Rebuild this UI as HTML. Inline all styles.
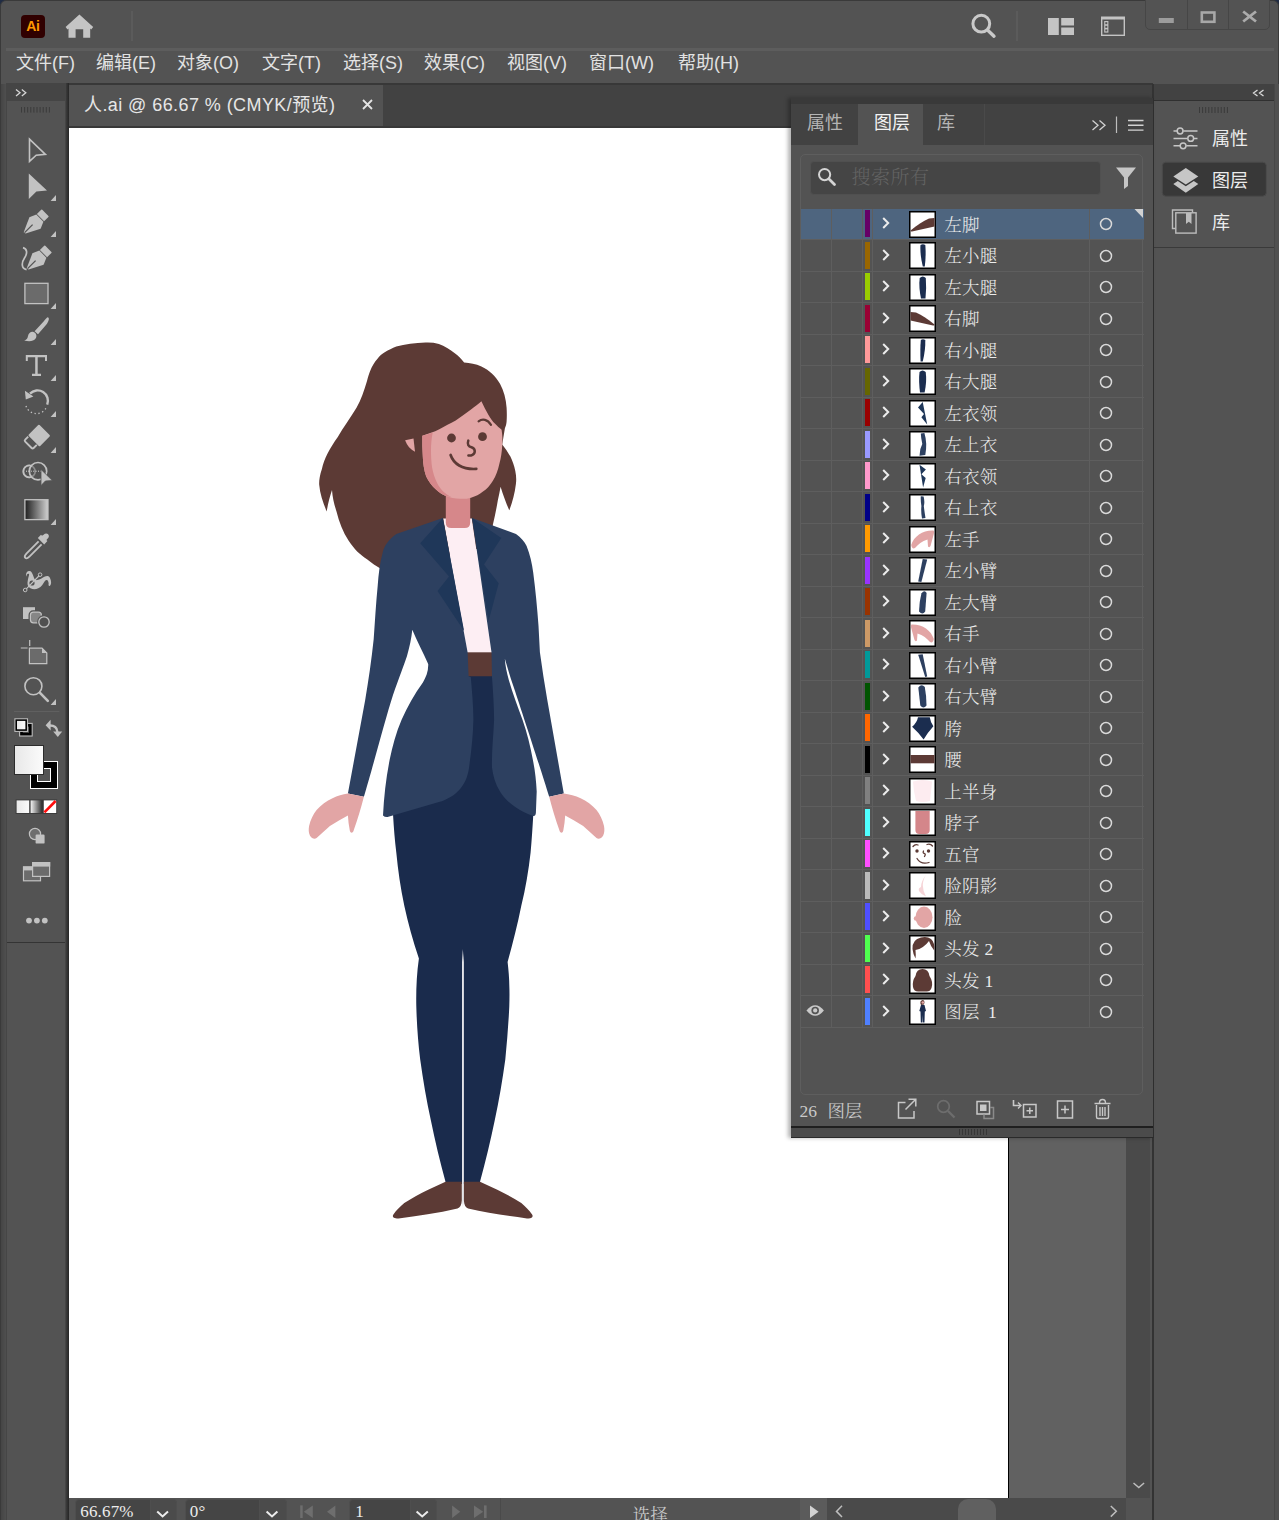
<!DOCTYPE html>
<html lang="zh-CN">
<head>
<meta charset="utf-8">
<title>人.ai @ 66.67 % (CMYK/预览)</title>
<style>
*{box-sizing:border-box;margin:0;padding:0}
html,body{width:1279px;height:1520px;overflow:hidden;background:#202c44}
body{position:relative;font-family:"Liberation Sans","Noto Sans CJK SC",sans-serif;color:#dcdcdc}
.abs{position:absolute}
svg{position:absolute;overflow:visible}
/* window frame */
#frame{left:0;top:0;width:1279px;height:1530px;background:#535353;border:1px solid #3a3a3a;border-radius:6px 6px 0 0}
/* title bar */
#titleline{left:6px;top:48px;width:1268px;height:2.600px;background:#5d5d5d}
#ailogo{left:21px;top:15px;width:24px;height:23px;background:#300000;border-radius:4px;color:#ff9a00;font:bold 14px/23px "Liberation Sans",sans-serif;text-align:center;letter-spacing:-0.3px}
.vsep{width:2px;background:#5b5b5b}
#winbtns{left:1145px;top:-1px;width:125px;height:31px;border:1px solid #464646;border-radius:0 0 5px 5px;background:#535353}
#winbtns i{position:absolute;top:0;width:1px;height:30px;background:#464646}
/* menu */
#menu{left:0;top:51px;height:32px;width:900px;font-size:18px;line-height:24px;color:#e2e2e2;white-space:nowrap}
#menu span{position:absolute;top:0}
/* tabs */
#tabstrip{left:68px;top:83px;width:1085px;height:45px;background:#424242;border-top:2px solid #383838;border-bottom:2px solid #383838;border-left:1px solid #383838}
#doctab{left:69px;top:85px;width:314px;height:41px;background:#535353;font-size:18px;line-height:24px;color:#e6e6e6;white-space:nowrap}
#canvas{left:69px;top:128px;width:940px;height:1370px;background:#fff;border-right:1px solid #000}
#paste{left:1009px;top:128px;width:117px;height:1370px;background:#616161}
#vscroll{left:1126px;top:128px;width:24px;height:1370px;background:#4a4a4a}
/* tool panel */
#toolhead{left:6px;top:83.300px;width:60px;height:18.200px;background:#454545}
#toolpanel{left:6px;top:84px;width:60px;height:1436px;border-left:1px solid #464646;border-right:1px solid #454545}
#toolbot{left:7px;top:941.500px;width:58px;height:1.500px;background:#343434}
#toolgap{left:66px;top:83px;width:3px;height:1437px;background:linear-gradient(90deg,#3c3c3c,#262626)}
#leftedge{left:1px;top:84px;width:5px;height:1436px;background:linear-gradient(90deg,#454545,#4f4f4f)}
/* status */
#status{left:69px;top:1498px;width:1084px;height:22px;background:#535353}
/* right dock */
/* layers panel */

#dock{left:1152px;top:84px;width:122px;height:1436px;background:#535353;border-left:2px solid #333}
.dk{position:absolute;left:58px;font-size:18px;line-height:24px;color:#ececec;white-space:nowrap}
#layers{left:791px;top:98px;width:363px;height:1040px;background:#535353;border-right:1.5px solid #2e2e2e;border-bottom:1px solid #2a2a2a;box-shadow:-3px 0 4px rgba(0,0,0,.3)}
.ptab{top:6px;height:41px;font-size:18px;line-height:24px;color:#b4b4b4}
.ptab span{position:absolute;top:6.500px;white-space:nowrap}
.ptab.on{background:#535353;color:#f2f2f2}
#lbox{left:9.300px;top:56px;width:343.200px;height:940.500px;border:1px solid #5e5e5e;border-radius:5px}
#search{left:18.600px;top:62.500px;width:291.500px;height:34px;background:#454545;border:1px solid #505050;border-radius:4px}
#search span{position:absolute;left:41px;top:4.500px;font:300 19px/24px "Liberation Serif","Noto Serif CJK SC",serif;color:#636363;letter-spacing:.5px}
.row{left:10px;width:342.500px;height:31.500px;border-bottom:1px solid #5e5e5e;
background-image:linear-gradient(#5e5e5e,#5e5e5e),linear-gradient(#5e5e5e,#5e5e5e),linear-gradient(#5e5e5e,#5e5e5e),linear-gradient(#5e5e5e,#5e5e5e);
background-size:1px 100%;background-repeat:no-repeat;background-position:29.800px 0,60.800px 0,70.800px 0,287.800px 0}
.row.sel{background-color:#4e657f}
.row .cb{position:absolute;left:63.800px;top:1.500px;width:5px;height:27.300px}
.row .chev{left:80.800px;top:8.800px}
.row .th{left:107.700px;top:2.200px}
.row .nm{position:absolute;left:143.200px;top:4.300px;font:300 17.500px/24px "Liberation Serif","Noto Serif CJK SC",serif;color:#ececec;white-space:nowrap;letter-spacing:.3px}
.row .tg{left:298.400px;top:8.900px}
#lfoot{left:8.500px;top:1001px;font:17.500px/24px "Liberation Serif","Noto Serif CJK SC",serif;color:#c9c9c9;white-space:nowrap;word-spacing:6px}

#status{overflow:hidden}
.sfield{top:1.400px;height:24px;background:#454545;border:1px solid #4e4e4e;border-radius:4px 0 0 0;font:17px/20px "Liberation Serif","Noto Serif CJK SC",serif;color:#ececec;letter-spacing:.15px}
.sfield span{position:absolute;top:1.700px;white-space:nowrap}
.sdrop{top:1.400px;height:24px;background:#4b4b4b;border:1px solid #4e4e4e;border-left:none;border-radius:0 4px 0 0}
#stool{left:563.700px;top:4.500px;font:17.500px/24px "Liberation Serif","Noto Serif CJK SC",serif;color:#c9c9c9;white-space:nowrap}
</style>
</head>
<body>
<div id="frame" class="abs"></div>
<div class="abs" style="left:1273.500px;top:84px;width:1px;height:1436px;background:#474747"></div><div class="abs" style="left:1274.500px;top:84px;width:4px;height:1436px;background:#505050"></div>
<!-- TITLE BAR -->
<div id="ailogo" class="abs">Ai</div>
<div id="titleline" class="abs"></div>
<div class="abs vsep" style="left:131px;top:11px;height:30px"></div>
<div class="abs vsep" style="left:1016px;top:11px;height:30px"></div>
<div id="winbtns" class="abs"><i style="left:41px"></i><i style="left:82px"></i></div>
<!-- TITLE ICONS -->
<svg id="ticons" class="abs" style="left:0;top:0" width="1279" height="50" viewBox="0 0 1279 50" fill="#c4c4c4">
<path d="M79.400 14.400 L93.200 27 L91.200 29.500 L90.200 28.600 V37.700 H83.200 V29.200 H75.600 V37.700 H68.500 V28.600 L67.500 29.500 L65.600 27 Z"/>
<circle cx="981.300" cy="23.700" r="8.400" fill="none" stroke="#c9c9c9" stroke-width="3"/>
<path d="M988 30.600 L994 36.200" stroke="#c9c9c9" stroke-width="3.400" stroke-linecap="round" fill="none"/>
<rect x="1048" y="18" width="10.800" height="17"/><rect x="1061.200" y="18" width="12.800" height="7.500"/><rect x="1061.200" y="27.500" width="12.800" height="7.500"/>
<rect x="1101.700" y="17.700" width="22.600" height="17.600" fill="none" stroke="#c4c4c4" stroke-width="1.400"/><rect x="1101" y="16.500" width="24" height="3"/>
<rect x="1104.200" y="21" width="4.200" height="11.600"/><g fill="#535353"><rect x="1105.300" y="22.200" width="2" height="2"/><rect x="1105.300" y="25.800" width="2" height="2"/><rect x="1105.300" y="29.400" width="2" height="2"/></g>
<!-- window buttons -->
<rect x="1158.800" y="18" width="15" height="5" fill="#9c9c9c"/>
<rect x="1201.800" y="12.500" width="12.600" height="9.300" fill="none" stroke="#a8a8a8" stroke-width="2.600"/>
<path d="M1243.200 11.500 L1256 21.500 M1256 11.500 L1243.200 21.500" stroke="#ababab" stroke-width="2.800" fill="none"/>
</svg>
<!-- MENU -->
<div id="menu" class="abs">
<span style="left:16px">文件(F)</span><span style="left:96px">编辑(E)</span><span style="left:177px">对象(O)</span><span style="left:262px">文字(T)</span><span style="left:343px">选择(S)</span><span style="left:424px">效果(C)</span><span style="left:507px">视图(V)</span><span style="left:589px">窗口(W)</span><span style="left:678px">帮助(H)</span>
</div>
<!-- DOCUMENT -->
<div id="tabstrip" class="abs"></div>
<div id="doctab" class="abs"><span class="abs" style="left:15px;top:8px;letter-spacing:.42px">人.ai @ 66.67 % (CMYK/预览)</span><svg class="abs" style="left:292px;top:13px" width="14" height="14"><path d="M2 2 L11 11 M11 2 L2 11" stroke="#e4e4e4" stroke-width="1.800" fill="none"/></svg></div>
<div id="canvas" class="abs"></div>
<div id="paste" class="abs"></div>
<!-- FIGURE -->
<svg id="figure" class="abs" style="left:0;top:0" width="1279" height="1520" viewBox="0 0 1279 1520">
<!-- hair -->
<path fill="#5c3a35" d="M425.6 342.6 C415 343 405 344.500 396.300 346.600 C388 350 381 354 377.700 358.500 C371 366 369 374 367 381 C364 391 361 400 356.500 407.700 C350 418 343 428 337.800 437 C330 448 324 459 321.900 468.900 C319.500 476 319 481 319.200 484.800 C320 494 323 503 326.700 511.400 C328 503 330 496 332 490 C332.500 497 334 504 336.500 511.400 C339 522 343 532 348.500 540.600 C354 549 360 555 367 559.200 C372 563 376 566 380.400 568.500 L400 572 L490 545 L492.900 524.500 C494.800 516.500 496.500 508.500 497.800 500.400 C498.900 495.800 499.800 491.200 500.600 486.700 C503 494.800 506 502.800 509.300 510.300 C512.500 501.800 514.800 493 515.900 484 C516.500 479.600 516.200 475.200 515.300 470.900 C514.200 465.900 512.600 461.100 510.400 456.600 C508 452.400 505.300 448.400 502.200 444.600 L504.900 428.200 C505.900 426.200 506.400 424 506.600 421.600 C506.900 417 506.900 412.400 506.600 407.700 C506 399 503.800 390.800 500 383.800 C495.500 376 489 370 481.400 366.500 C475.800 364 470 362.800 464.100 362.500 C461.500 359 458.400 355.900 454.800 353.200 C450 349.200 444.600 346 438.900 343.900 C434.600 342.800 430.200 342.400 425.600 342.600Z"/>
<!-- shirt -->
<path fill="#fdeef3" d="M443.200 518.500 L471.800 518.500 L491.500 652.800 H467.600Z"/>
<!-- neck -->
<path fill="#d6878a" d="M445.800 488 H470.200 V522.500 Q470.200 528 464.700 528 H451.300 Q445.800 528 445.800 522.500Z"/>
<!-- face -->
<path fill="#e2a5a5" d="M422.300 435.800 C428 434 434 432 439.300 429.300 C445 426 450 423.500 455.700 420.500 C461 417 466 413.500 471 409.600 C475 406.500 478.500 404 481.400 401.300 C483.500 406 486 410.500 488.500 415 C490.500 418.500 492.500 421.500 495.100 423.800 C497 426 499.500 428 501.600 429.800 C502.500 435 502.600 440 502.200 445.700 C501.800 452 501 458 499.500 463.200 C498 470 496 476 492.900 480.700 C490 485.500 487 489 483 491.600 C479.500 494.500 475.500 496.500 471 497.700 C467.500 498.800 463.500 499 460 498.800 C455 498.600 450 497.500 445.800 496 C442 494.500 439 492.500 436 489.500 C432 486 428.500 481.500 426.100 476.300 C424 470 423 463.500 422.800 456.600 C422.300 449.500 422.200 442.500 422.300 435.800Z"/>
<path fill="#d6878a" d="M422.300 435.800 C426 434.800 429.500 433.800 432.700 432.500 C431.500 438.500 431 444.500 431 450 C431 456 431.300 462 432.100 467.600 C433 473 434.800 478.200 437.100 482.900 C439 486.500 441.500 490 444.700 492.700 C446.800 494.500 449 496 451.300 497.100 C449.500 496.800 447.500 496.500 445.800 496 C442 494.500 439 492.500 436 489.500 C432 486 428.500 481.500 426.100 476.300 C424 470 423 463.500 422.800 456.600 C422.300 449.500 422.200 442.500 422.300 435.800Z"/>
<!-- ear -->
<path fill="#e2a5a5" d="M405.100 440.200 L413.500 438.600 L415 451.700 C410.500 449.500 407 445.500 405.100 440.200Z"/>
<!-- features -->
<g fill="#5c3a35"><circle cx="451.500" cy="438" r="4.400"/><circle cx="482.500" cy="436.700" r="4.400"/></g>
<g fill="none" stroke="#5c3a35" stroke-linecap="round">
<path d="M478.600 421.300 C482.500 418.300 487.500 419.300 491 424.800" stroke-width="2.200"/>
<path d="M468.300 440.600 C467 444.500 468.500 446.500 471.500 447.200 C475.500 448.500 475.800 453 472.500 454.800 C471 455.600 469.500 455.700 468.400 455.500" stroke-width="2.500"/>
<path d="M450.600 455 C453.500 463.500 462 469.800 476.300 468.900" stroke-width="2.700"/>
</g>
<!-- belt -->
<path fill="#5c3a35" d="M467 652.300 H492 V677 H467Z"/>
<!-- pants -->
<path fill="#1a2b4c" d="M467 676.200 H493 L534 800 L533.200 816 C532.500 828 531.800 840 530.600 852.600 C528.500 871 525.500 889 521.300 905.800 C517.500 925 512.500 944 507.600 962 C508.500 970 509.300 978 509.300 985.600 C509.600 992 509.500 999 509.300 1006.300 C508.500 1024 507 1042 505.300 1059.500 C502.500 1080 499 1100.500 494.700 1120.600 C490.500 1141 485.500 1161.500 480 1181.800 L479.500 1184 H446 L445.500 1181.800 C440 1161.500 435 1141 430.900 1120.600 C426.500 1100.500 423 1080 420.200 1059.500 C418 1042 416.800 1024 416.300 1006.300 C416 992 416.500 975 418.900 958.500 C413 941 408 923 404.300 905.800 C400.500 888 398 870 396.300 852.600 C394.800 840 393.800 828 393.100 815.400 L392 800Z"/>
<path fill="#e4e4e8" d="M462.800 949 L463.900 962 V1202 L462.900 1207 L462 1202 V962Z"/>
<!-- shoes -->
<path fill="#5c3a35" d="M445.500 1181.800 H461.800 V1200.400 C461.600 1205 460 1207.600 457.500 1208.400 C438 1213 417 1216 398.500 1218.400 C394 1219 391.800 1217 393.400 1214.600 C396.500 1210 400 1206.500 404.300 1203 C412 1198 420 1193.800 428.200 1189.700Z"/>
<path fill="#5c3a35" d="M480 1181.800 H463.900 V1200.400 C464.100 1205 465.700 1207.600 468.100 1208.400 C487.500 1213 508.500 1216 527 1218.400 C531.500 1219 533.700 1217 532.100 1214.600 C529 1210 525.500 1206.500 521.300 1203 C513.500 1198 505.500 1193.800 497.300 1189.700Z"/>
<!-- jacket left (with arm) -->
<path fill="#2d4060" d="M442.800 518 L396.300 534 C388 540 384.500 546 383 551.300 C380 562 378.500 574 377.700 585.800 C376 603 375 621 373.700 639 C371.500 660 368.500 680 365.200 700 L347.900 793.600 L363.900 796.800 C372 770 385 720 393 695 C399 678 404 665 407 656 C409.500 647 411.500 638 412.300 629.700 C417 641 423 652 428.200 664 C428.500 671 426 677 422.900 682.500 C414.500 694 407.500 706.500 401.600 719.700 C396 732.500 392.500 746 389.700 759.600 C386 778 384 796.500 383 815.400 Q385 817.500 388.400 816.800 L438.900 802.100 C447 799.500 454.500 795.500 460.100 788.900 C466 782 468.500 773.500 469.400 764.900 C471.500 750 473 735 473.400 719.700 C473.300 705 472 691 470.800 677.200 L468.600 676.200 L467.600 652.300Z"/>
<!-- jacket right (with arm) -->
<path fill="#2d4060" d="M472.100 518 L516 534 C521 537.500 524.500 541.500 526.600 546 C530 554.500 532 563.500 533.200 572.500 C535.500 590 537.200 608 538.500 625.700 L539.900 652.300 C542 668 544.500 684 547.300 700 L563.800 793.600 L549.200 796.800 C541 770 523 715 514 688 C510.500 678 507.500 668 504.800 658.600 C505.300 666 506.800 673 508.800 679.900 C512.600 693.500 517.800 706.500 522.500 719.700 C527 732.500 530.400 746 532.800 759.600 C535 770 536.200 781 536.700 791.500 L535.900 812.800 Q535.500 816.500 533.200 816 C527 814 521 811 516 807.500 C509.500 803.500 504 798 500 791.500 C495.500 784.500 493 776 492 767.600 C491.500 751.500 493.500 735.500 494.100 719.700 C494 705.500 493 691 492 677.200 L491.500 652.300Z"/>
<!-- lapels -->
<path fill="#1f3759" d="M442.800 518 L420.200 543.300 L449 576.500 L437.500 591.100 L464.100 631Z"/>
<path fill="#1f3759" d="M472.100 518 L501.300 538 L484 564.600 L498.700 583.200 L488.600 621Z"/>
<!-- hands -->
<path fill="#e2a5a5" d="M347.900 793.600 L363.900 796.800 C361 808 357.500 820 353.800 830 C353 833.500 350.500 833.500 349.800 830.500 C348.800 825.500 348.200 820.500 347.900 815.400 C342 818.500 336 822 329.900 826 C325.500 830 321 834 316.600 838 C314.500 839.500 311.800 838.500 309.900 835.400 C308.500 832.500 308.500 829.500 309.100 826 C310.500 820 313 814.500 316.600 810 C321 805 326.500 801 332.500 798.200 C337.500 796 342.500 794.500 347.900 793.600Z"/>
<path fill="#e2a5a5" d="M563.800 793.600 L549.200 796.800 C552.100 808 555.600 820 559.300 830 C560.100 833.500 562.600 833.500 563.300 830.500 C564.300 825.500 564.900 820.500 565.200 815.400 C571.100 818.500 577.100 822 583.200 826 C587.600 830 592.100 834 596.500 838 C598.600 839.500 601.300 838.500 603.200 835.400 C604.600 832.500 604.600 829.500 604 826 C602.600 820 600.100 814.500 596.500 810 C592.100 805 586.600 801 580.600 798.200 C575.600 796 569.200 794.500 563.800 793.600Z"/>
</svg>
<div id="vscroll" class="abs"></div>
<!-- STATUS BAR -->
<div id="status" class="abs">
<div class="abs sfield" style="left:6px;width:76px"><span style="left:4.300px">66.67%</span></div>
<div class="abs sdrop" style="left:82px;width:26px"></div>
<div class="abs sfield" style="left:115.500px;width:75px"><span style="left:4.300px">0°</span></div>
<div class="abs sdrop" style="left:190.500px;width:27px"></div>
<div class="abs sfield" style="left:279.700px;width:62px"><span style="left:5.500px">1</span></div>
<div class="abs sdrop" style="left:341.700px;width:26px"></div>
<div class="abs" style="left:430.500px;top:0;width:1px;height:22px;background:#4a4a4a"></div>
<div class="abs" style="left:730.500px;top:0;width:27.500px;height:22px;background:#5b5b5b"></div>
<div class="abs" style="left:758px;top:0;width:299px;height:22px;background:#4a4a4a"></div>
<div class="abs" style="left:889.400px;top:1.400px;width:38px;height:30px;border-radius:10px;background:#606060"></div>
<span class="abs" id="stool">选择</span>
<svg class="abs" style="left:0;top:0" width="1084" height="22" viewBox="69 1498 1084 22" fill="none">
<g stroke="#ececec" stroke-width="2"><path d="M157.200 1511.400 L162.600 1516.400 L168 1511.400"/><path d="M266.600 1511.400 L272 1516.400 L277.400 1511.400"/><path d="M416.600 1511.400 L422.200 1516.400 L427.800 1511.400"/></g>
<g fill="#6e6e6e"><rect x="300.200" y="1505.400" width="2.500" height="12.600"/><path d="M312.800 1505.400 V1518 L303.800 1511.700Z"/><path d="M335.400 1505.400 V1518 L327 1511.700Z"/><path d="M452.100 1505.400 V1518 L460.200 1511.700Z"/><path d="M474 1505.400 V1518 L483.200 1511.700Z"/><rect x="484" y="1505.400" width="2.600" height="12.600"/></g>
<path d="M810 1505.600 V1518 L818.600 1511.800Z" fill="#d2d2d2"/>
<path d="M842 1505.800 L836.500 1511.400 L842 1517" stroke="#bdbdbd" stroke-width="1.500"/>
<path d="M1110.800 1506 L1116.300 1511.300 L1110.800 1516.600" stroke="#bdbdbd" stroke-width="1.500"/>
</svg>
</div>
<svg class="abs" style="left:1127px;top:1478px" width="24" height="14"><path d="M6.500 5 L11.800 9.600 L17.100 5" fill="none" stroke="#bdbdbd" stroke-width="1.500"/></svg>
<!-- TOOLS -->
<div id="leftedge" class="abs"></div>
<div id="toolpanel" class="abs"></div>
<div id="toolbot" class="abs"></div>
<div id="toolgap" class="abs"></div>
<div id="toolhead" class="abs"></div>
<!-- TOOL ICONS -->
<svg id="tools" class="abs" style="left:0;top:0" width="80" height="960" viewBox="0 0 80 960" fill="#c2c2c2" stroke="none">
<defs>
<linearGradient id="gbw" x1="0" x2="1" y1="0" y2="0"><stop offset="0" stop-color="#1e1e1e"/><stop offset="1" stop-color="#d0d0d0"/></linearGradient>
<linearGradient id="gwh" x1="0" x2="1" y1="0" y2="0"><stop offset="0" stop-color="#e8e8e8"/><stop offset="1" stop-color="#fbfbfb"/></linearGradient>
<linearGradient id="gwb" x1="0" x2="1" y1="0" y2="0"><stop offset="0" stop-color="#f4f4f4"/><stop offset="1" stop-color="#2a2a2a"/></linearGradient>
<g id="pen"><path d="M36.3 214.6 L43.4 221.7 L40.6 228.8 L25.6 233.6 L23.7 232.3 L29.4 217.3 Z"/><path d="M36.9 214 L41.2 209.7 Q41.7 209.2 42.3 209.8 L48.4 215.9 Q48.9 216.4 48.4 216.9 L44.1 221.2 Z"/><path d="M24.6 232.6 L32.6 224.6" stroke="#535353" stroke-width="1.3" fill="none"/></g>
<path id="tri" d="M56 195 V201 H50.6 Z"/>
</defs>
<!-- collapse chevrons -->
<path d="M16 89.600 L20 92.800 L16 96 M21.800 89.600 L25.800 92.800 L21.800 96" stroke="#d6d6d6" stroke-width="1.300" fill="none"/>
<!-- grip -->
<path d="M21.500 107v5.600M24.600 107v5.600M27.700 107v5.600M30.800 107v5.600M33.900 107v5.600M37 107v5.600M40.100 107v5.600M43.200 107v5.600M46.300 107v5.600M49.400 107v5.600" stroke="#3b3b3b" stroke-width="1" fill="none"/>
<!-- 1 selection -->
<path d="M29.500 139.200 L45.400 154.300 L36.200 155.200 L29.500 161.400 Z" fill="none" stroke="#c2c2c2" stroke-width="1.600" stroke-linejoin="miter"/>
<!-- 2 direct selection -->
<path d="M28.8 173.4 L47 190.6 L36.4 191.4 L28.8 199 Z"/>
<use href="#tri"/>
<!-- 3 pen -->
<use href="#pen"/><use href="#tri" y="36"/>
<!-- 4 curvature -->
<use href="#pen" x="3" y="36"/>
<path d="M23 247.6 C27.5 249 27.5 253.5 24.5 258 C21.5 262.5 21 268.5 26.6 269.6" fill="none" stroke="#c2c2c2" stroke-width="1.700"/>
<!-- 5 rect -->
<rect x="24.9" y="283.3" width="23.1" height="20.3" fill="#6b6b6b" stroke="#c2c2c2" stroke-width="1.3"/><use href="#tri" y="108"/>
<!-- 6 brush -->
<path d="M48.2 317.4 C49.6 318.4 48.6 321.6 46.4 324.4 L38 334.2 L34.6 331.2 L43.6 321.4 C45.8 318.8 47.4 316.9 48.2 317.4 Z"/>
<path d="M33.6 332 C36.4 333 37.2 336.2 35.6 338.6 C33.6 341.6 29 342 24.2 340.6 C27 339.6 27.6 338 28 336 C28.6 333 31 331.2 33.6 332 Z"/>
<use href="#tri" y="144"/>
<!-- 7 type -->
<path d="M25.8 355 H47 V361 H45 V357.3 H37.7 V373.8 H41 V376 H32 V373.8 H35.2 V357.3 H27.8 V361 H25.8 Z"/><use href="#tri" y="180"/>
<!-- 8 rotate -->
<path d="M30 393.6 A10.4 10.4 0 0 1 47.2 404.6" fill="none" stroke="#c2c2c2" stroke-width="2.4"/>
<path d="M24.9 390.8 L25.8 399.4 L33.4 396.6 Z"/>
<path d="M26 406 A11 11 0 0 0 46.4 407.4" fill="none" stroke="#c2c2c2" stroke-width="1.3" stroke-dasharray="1.3 2.6"/>
<use href="#tri" y="216"/>
<!-- 9 eraser -->
<path d="M38.2 425.1 Q38.9 424.4 39.6 425.1 L49.6 435.1 Q50.3 435.8 49.6 436.5 L40.2 445.9 Q39.5 446.6 38.8 445.9 L28.8 435.9 Q28.1 435.2 28.8 434.5 Z"/>
<path d="M28.2 436.6 L25.2 439.6 Q24.2 440.6 25.2 441.6 L31.6 448 Q32.6 449 33.6 448 L36.8 444.8" fill="none" stroke="#c2c2c2" stroke-width="1.900"/>
<use href="#tri" y="252"/>
<!-- 10 shape builder -->
<circle cx="29.300" cy="471.400" r="5.900" fill="none" stroke="#8c8c8c" stroke-width="1.700"/>
<path d="M31.800 476.700 A5.900 5.900 0 1 1 31.800 466.100" fill="none" stroke="#c2c2c2" stroke-width="1.700"/>
<circle cx="38" cy="471.200" r="8.700" fill="none" stroke="#c2c2c2" stroke-width="1.700"/>
<path d="M26 471.2 H41" stroke="#d8d8d8" stroke-width="1" stroke-dasharray="1 1.4" fill="none"/>
<path d="M41 469.4 L52.4 480.6 L45.4 481 L41 485.6 Z" stroke="#535353" stroke-width="0.8"/>
<!-- 11 gradient -->
<rect x="24.9" y="499.7" width="23.1" height="19.9" fill="url(#gbw)" stroke="#c2c2c2" stroke-width="1.3"/><use href="#tri" y="324"/>
<!-- 12 eyedropper -->
<path d="M38.600 541.400 L26.400 553.600 Q23.800 556.400 25.300 557.800 Q26.700 559.200 29.400 556.600 L41.600 544.400" fill="none" stroke="#c2c2c2" stroke-width="1.800"/>
<path d="M43.6 534.8 C45.6 532.6 48.4 533.4 48.8 535.6 C49.2 537.4 48 538.4 46.4 540 L47.4 541 L44.2 544.4 L37.8 538 L41 534.8 L42 535.8 Z"/>
<!-- 13 puppet warp -->
<path d="M26.200 576.800 C25.600 573.500 27 571.300 28.800 571.100 C30 570.900 30.900 571.200 31.400 571.900 C33 574 33.500 576.800 34.400 578.800 C35.200 580.200 36 580.400 37 580.100 C38.500 579.900 39.800 579.500 41 578.800 C42.400 578 43.600 577.100 44.900 576.500 C45.800 576.100 46.700 575.900 47.500 576 C48.800 576.300 49.700 577.200 50.200 578.400 C50.800 579.700 51.100 581 51.100 582.400 C51.100 583.800 50.600 585 49.800 586 C49.200 586.200 48.700 585.800 48.500 585 C48.700 584 48.700 583.200 48.500 582.400 C48.200 581.300 47.700 580.400 46.900 580.100 C46.200 580 45.500 580.400 44.900 581.100 C44 582.400 43.200 583.800 42.300 585 C41.200 586.500 39.800 587.600 38.300 588.300 C37 588.900 35.700 589.300 34.400 589.300 C33 589.300 31.600 588.900 30.400 588.300 C29.400 587.800 28.700 587.100 28.200 586.300 C27.600 585.100 27.400 583.800 27.500 582.400 C27.700 580.600 28.100 578.800 28.500 577.100 C28.800 576 29.200 575 29.100 574.200 C28.500 573.600 27.400 573.800 26.800 574.800 C26.500 575.400 26.400 576.100 26.200 576.800 Z"/>
<circle cx="32" cy="583" r="2.600" fill="#535353"/>
<path d="M36 577.600 L38.800 574.800 L39.800 576.400 L37.400 578.600Z" fill="#535353"/>
<path d="M25.600 589.600 L39.800 575" stroke="#c2c2c2" stroke-width="1.100" fill="none"/>
<circle cx="25.200" cy="590" r="1.800" fill="#535353" stroke="#c2c2c2" stroke-width="1"/>
<circle cx="40.100" cy="574.700" r="1.800" fill="#535353" stroke="#c2c2c2" stroke-width="1"/>
<!-- 14 blend -->
<rect x="23" y="607.2" width="12" height="11.8"/>
<rect x="29.8" y="611.6" width="12" height="11.6" rx="3.4" fill="#868686" stroke="#535353" stroke-width="2.6"/>
<rect x="30.4" y="612.2" width="11" height="10.6" rx="3" fill="#868686" stroke="#c2c2c2" stroke-width="1.2"/>
<circle cx="44" cy="622" r="5.6" fill="#535353" stroke="#535353" stroke-width="2.6"/>
<circle cx="44" cy="622" r="5.2" fill="#505050" stroke="#c2c2c2" stroke-width="1.3"/>
<!-- 15 artboard -->
<path d="M29.7 640 V646 M20.8 648 H27.6" stroke="#c2c2c2" stroke-width="1.2" fill="none"/>
<path d="M29.4 648.2 H42 L46.8 653 V663.6 H29.4 Z" fill="#6b6b6b" stroke="#c2c2c2" stroke-width="1.2"/>
<path d="M42 648.2 L46.8 653 H42 Z"/>
<!-- 16 zoom -->
<circle cx="33.4" cy="686.2" r="8.5" fill="none" stroke="#c2c2c2" stroke-width="1.6"/>
<path d="M40 692.8 L47.8 700.8" stroke="#c2c2c2" stroke-width="2.6" stroke-linecap="round" fill="none"/>
<use href="#tri" y="504"/>
<!-- separator -->
<path d="M14 711.5 H59.4" stroke="#606060" stroke-width="1" fill="none"/>
<!-- default fill/stroke -->
<rect x="19.6" y="723.4" width="12.6" height="12.6" fill="#000" stroke="#bdbdbd" stroke-width="1.1"/>
<rect x="22.8" y="726.6" width="6.2" height="6.2" fill="#535353"/>
<rect x="14.9" y="718.8" width="12.6" height="12.6" fill="#000" stroke="#bdbdbd" stroke-width="1.1"/>
<rect x="17" y="720.9" width="8.4" height="8.4" fill="url(#gwh)"/>
<!-- swap -->
<path d="M49 725.6 C54.4 725.2 57.2 727.4 57.4 732" fill="none" stroke="#c2c2c2" stroke-width="2.4"/>
<path d="M45.6 725.2 L50.6 719.8 V730.4 Z"/><path d="M53.2 731.4 H62.2 L57.8 737 Z"/>
<!-- stroke swatch -->
<rect x="30.500" y="761.500" width="27" height="27" fill="#000" stroke="#fff" stroke-width="1"/>
<rect x="37.500" y="768.500" width="13" height="13" fill="#535353" stroke="#fff" stroke-width="1"/>
<!-- fill swatch -->
<rect x="14.500" y="745.500" width="29" height="29" fill="url(#gwh)" stroke="#2c2c2c" stroke-width="1"/>
<!-- color/gradient/none -->
<rect x="15.6" y="799.4" width="41.6" height="14.6" fill="#3c3c3c"/>
<rect x="16.6" y="800.4" width="12.6" height="12.6" fill="url(#gwh)"/>
<rect x="30.6" y="800.4" width="11.8" height="12.6" fill="url(#gwb)"/>
<rect x="43.8" y="800.4" width="12.4" height="12.6" fill="#fff"/>
<path d="M44.4 812.4 L55.6 801" stroke="#ff0d0d" stroke-width="2.6" fill="none"/>
<!-- draw mode -->
<circle cx="35" cy="834" r="5.6" fill="#6e6e6e" stroke="#c2c2c2" stroke-width="1.2"/>
<rect x="35.6" y="834.6" width="9" height="9" rx="1.2"/>
<!-- screen mode -->
<rect x="23.5" y="867" width="17" height="13.8" fill="#6b6b6b" stroke="#c2c2c2" stroke-width="1.2"/><rect x="23" y="866.4" width="18" height="4"/>
<rect x="32.6" y="862.6" width="17" height="13.8" fill="#6b6b6b" stroke="#c2c2c2" stroke-width="1.2"/><rect x="32" y="862" width="18.2" height="4.6"/>
<!-- dots -->
<circle cx="29" cy="920.6" r="2.9"/><circle cx="36.9" cy="920.6" r="2.9"/><circle cx="44.8" cy="920.6" r="2.9"/>
</svg>
<!-- DOCK -->
<div id="dock" class="abs">
<div class="abs" style="left:0;top:0;width:120px;height:17px;background:#424242;border-bottom:1.5px solid #303030"></div>
<svg class="abs" style="left:0;top:0" width="122" height="170" fill="none" stroke="#c6c6c6">
<path d="M103.500 6 L99.500 9 L103.500 12 M109.500 6 L105.500 9 L109.500 12" stroke="#dadada" stroke-width="1.300"/>
<path d="M45.500 23v6M48.600 23v6M51.700 23v6M54.800 23v6M57.900 23v6M61 23v6M64.100 23v6M67.200 23v6M70.300 23v6M73.400 23v6" stroke="#3a3a3a" stroke-width="1"/>
<!-- properties icon -->
<g stroke-width="1.500"><path d="M19.500 47 H23 M29.200 47 H43.500 M19.500 54.400 H33.500 M39.800 54.400 H43.500 M19.500 61.800 H26 M32.300 61.800 H43.500"/><circle cx="26.100" cy="47" r="2.900"/><circle cx="36.700" cy="54.400" r="2.900"/><circle cx="29.100" cy="61.800" r="2.900"/></g>
<!-- selected bg -->
<rect x="8.300" y="78.200" width="104" height="34" rx="3.500" fill="#383838" stroke="#4b4b4b" stroke-width="1"/>
<!-- layers icon -->
<path d="M19.300 92.500 L31.800 84 L44.300 92.500 L31.800 100.500 Z" fill="#c6c6c6" stroke="none"/>
<path d="M19.300 100 L23.800 97 L31.800 102.200 L39.800 97 L44.300 100 L31.800 108.800 Z" fill="#c6c6c6" stroke="none"/>
<!-- library icon -->
<g stroke-width="1.400" stroke="#bdbdbd"><path d="M21.500 144.500 H18.500 V126 H38.500 V128.500"/><rect x="21.800" y="128.800" width="20.300" height="20.300"/></g>
<path d="M32 129 H37.500 V140 L34.750 137.800 L32 140 Z" fill="#bdbdbd" stroke="none"/>
</svg>
<span class="dk" style="top:42.600px">属性</span><span class="dk" style="top:84.600px">图层</span><span class="dk" style="top:127px">库</span>
<div class="abs" style="left:0;top:162.500px;width:120px;height:1.500px;background:#3a3a3a"></div>
</div>
<!--LAYERS-START-->
<!-- LAYERS PANEL -->
<div id="layers" class="abs">
<div class="abs" style="left:0;top:0;width:362px;height:6px;background:#393939"></div>
<div class="abs" style="left:0;top:6px;width:362px;height:41px;background:#424242"></div>
<div class="abs ptab" style="left:0;width:67px"><span style="left:16px">属性</span></div>
<div class="abs ptab on" style="left:67px;width:65px"><span style="left:16px">图层</span></div>
<div class="abs ptab" style="left:132px;width:61.500px;border-right:1px solid #4a4a4a"><span style="left:14px">库</span></div>
<svg class="abs" style="left:0;top:2px" width="362" height="60" fill="none" stroke="#d2d2d2"><path d="M301.500 20.600 L307 25.300 L301.500 30 M308.500 20.600 L314 25.300 L308.500 30" stroke-width="1.300"/><path d="M325.500 16.500 V33" stroke-width="1.200" stroke="#bdbdbd"/><path d="M337 20.500 H352.500 M337 25.300 H352.500 M337 30.100 H352.500" stroke-width="1.400"/></svg>
<div class="abs" id="lbox"></div>
<div class="abs" id="search"><span>搜索所有</span></div>
<svg class="abs" style="left:26.400px;top:69px" width="22" height="20" fill="none" stroke="#d4d4d4"><circle cx="7.600" cy="7.600" r="5.600" stroke-width="2"/><path d="M12 12 L17.500 17.500" stroke-width="2.800" stroke-linecap="round"/></svg>
<svg class="abs" style="left:324px;top:67.8px" width="24" height="26"><path d="M1 1.500 H21 L13 11.500 V20 L9 23 V11.500Z" fill="#c6c6c6"/></svg>
<div class="abs row sel" style="top:110.5px"><i class="cb" style="background:#660066"></i><svg class="chev" width="8" height="12"><path d="M1.200 1 L6.200 6 L1.200 11" fill="none" stroke="#ececec" stroke-width="2"/></svg><svg class="th" width="27" height="27" viewBox="0 0 27 27"><rect x="0.750" y="0.750" width="25.500" height="25.500" fill="#fff" stroke="#000" stroke-width="1.500"/><path d="M1.5 19.5 C8 14 14 10 20 7.5 L25.5 7 V15.5 L3 20.5 Q1 20.8 1.5 19.5Z" fill="#5c3a35"/></svg><span class="nm">左脚</span><svg class="tg" width="14" height="14"><circle cx="7" cy="7" r="5.500" fill="none" stroke="#d9d9d9" stroke-width="1.500"/></svg></div>
<div class="abs row" style="top:142.0px"><i class="cb" style="background:#996600"></i><svg class="chev" width="8" height="12"><path d="M1.200 1 L6.200 6 L1.200 11" fill="none" stroke="#ececec" stroke-width="2"/></svg><svg class="th" width="27" height="27" viewBox="0 0 27 27"><rect x="0.750" y="0.750" width="25.500" height="25.500" fill="#fff" stroke="#000" stroke-width="1.500"/><path d="M11.500 3 Q13.800 1.500 16.300 3 Q17.200 13 15.800 24.600 H13.800 Q10.800 12 11.500 3Z" fill="#1b2d4f"/></svg><span class="nm">左小腿</span><svg class="tg" width="14" height="14"><circle cx="7" cy="7" r="5.500" fill="none" stroke="#d9d9d9" stroke-width="1.500"/></svg></div>
<div class="abs row" style="top:173.5px"><i class="cb" style="background:#99cc00"></i><svg class="chev" width="8" height="12"><path d="M1.200 1 L6.200 6 L1.200 11" fill="none" stroke="#ececec" stroke-width="2"/></svg><svg class="th" width="27" height="27" viewBox="0 0 27 27"><rect x="0.750" y="0.750" width="25.500" height="25.500" fill="#fff" stroke="#000" stroke-width="1.500"/><path d="M10.700 4 Q13.800 1 16.800 4 Q17.600 14 16.500 24.600 H12 Q9.600 13 10.700 4Z" fill="#1b2d4f"/></svg><span class="nm">左大腿</span><svg class="tg" width="14" height="14"><circle cx="7" cy="7" r="5.500" fill="none" stroke="#d9d9d9" stroke-width="1.500"/></svg></div>
<div class="abs row" style="top:205.0px"><i class="cb" style="background:#990033"></i><svg class="chev" width="8" height="12"><path d="M1.200 1 L6.200 6 L1.200 11" fill="none" stroke="#ececec" stroke-width="2"/></svg><svg class="th" width="27" height="27" viewBox="0 0 27 27"><rect x="0.750" y="0.750" width="25.500" height="25.500" fill="#fff" stroke="#000" stroke-width="1.500"/><path d="M25.5 19.5 C19 14 13 10 7 7.5 L1.5 7 V15.5 L24 20.5 Q26 20.8 25.5 19.5Z" fill="#5c3a35"/></svg><span class="nm">右脚</span><svg class="tg" width="14" height="14"><circle cx="7" cy="7" r="5.500" fill="none" stroke="#d9d9d9" stroke-width="1.500"/></svg></div>
<div class="abs row" style="top:236.5px"><i class="cb" style="background:#ff9999"></i><svg class="chev" width="8" height="12"><path d="M1.200 1 L6.200 6 L1.200 11" fill="none" stroke="#ececec" stroke-width="2"/></svg><svg class="th" width="27" height="27" viewBox="0 0 27 27"><rect x="0.750" y="0.750" width="25.500" height="25.500" fill="#fff" stroke="#000" stroke-width="1.500"/><path d="M11.800 3 Q14 1.500 16.300 3 Q16.600 13 13.700 24.600 H11.600 Q11 12 11.800 3Z" fill="#1b2d4f"/></svg><span class="nm">右小腿</span><svg class="tg" width="14" height="14"><circle cx="7" cy="7" r="5.500" fill="none" stroke="#d9d9d9" stroke-width="1.500"/></svg></div>
<div class="abs row" style="top:268.0px"><i class="cb" style="background:#666600"></i><svg class="chev" width="8" height="12"><path d="M1.200 1 L6.200 6 L1.200 11" fill="none" stroke="#ececec" stroke-width="2"/></svg><svg class="th" width="27" height="27" viewBox="0 0 27 27"><rect x="0.750" y="0.750" width="25.500" height="25.500" fill="#fff" stroke="#000" stroke-width="1.500"/><path d="M10.500 4 Q13.500 1 16.700 4 Q18 13 15.600 24.600 H11 Q9.500 13 10.500 4Z" fill="#1b2d4f"/></svg><span class="nm">右大腿</span><svg class="tg" width="14" height="14"><circle cx="7" cy="7" r="5.500" fill="none" stroke="#d9d9d9" stroke-width="1.500"/></svg></div>
<div class="abs row" style="top:299.5px"><i class="cb" style="background:#990000"></i><svg class="chev" width="8" height="12"><path d="M1.200 1 L6.200 6 L1.200 11" fill="none" stroke="#ececec" stroke-width="2"/></svg><svg class="th" width="27" height="27" viewBox="0 0 27 27"><rect x="0.750" y="0.750" width="25.500" height="25.500" fill="#fff" stroke="#000" stroke-width="1.500"/><path d="M13.700 2 L9 7.400 L15 14 L12.400 17.300 L18.200 24.600Z" fill="#1f3759"/></svg><span class="nm">左衣领</span><svg class="tg" width="14" height="14"><circle cx="7" cy="7" r="5.500" fill="none" stroke="#d9d9d9" stroke-width="1.500"/></svg></div>
<div class="abs row" style="top:331.0px"><i class="cb" style="background:#9999ff"></i><svg class="chev" width="8" height="12"><path d="M1.200 1 L6.200 6 L1.200 11" fill="none" stroke="#ececec" stroke-width="2"/></svg><svg class="th" width="27" height="27" viewBox="0 0 27 27"><rect x="0.750" y="0.750" width="25.500" height="25.500" fill="#fff" stroke="#000" stroke-width="1.500"/><path d="M11.800 2.500 L15.400 2 Q18.500 12 16.300 24 L10.500 24.800 Q10.500 18 13.300 13 Q12 7 11.800 2.500Z" fill="#2d4060"/></svg><span class="nm">左上衣</span><svg class="tg" width="14" height="14"><circle cx="7" cy="7" r="5.500" fill="none" stroke="#d9d9d9" stroke-width="1.500"/></svg></div>
<div class="abs row" style="top:362.5px"><i class="cb" style="background:#ff99cc"></i><svg class="chev" width="8" height="12"><path d="M1.200 1 L6.200 6 L1.200 11" fill="none" stroke="#ececec" stroke-width="2"/></svg><svg class="th" width="27" height="27" viewBox="0 0 27 27"><rect x="0.750" y="0.750" width="25.500" height="25.500" fill="#fff" stroke="#000" stroke-width="1.500"/><path d="M10.500 1.700 L16.900 6.400 L12.400 11.300 L16.700 15.100 L14.100 24.400Z" fill="#1f3759"/></svg><span class="nm">右衣领</span><svg class="tg" width="14" height="14"><circle cx="7" cy="7" r="5.500" fill="none" stroke="#d9d9d9" stroke-width="1.500"/></svg></div>
<div class="abs row" style="top:394.0px"><i class="cb" style="background:#000087"></i><svg class="chev" width="8" height="12"><path d="M1.200 1 L6.200 6 L1.200 11" fill="none" stroke="#ececec" stroke-width="2"/></svg><svg class="th" width="27" height="27" viewBox="0 0 27 27"><rect x="0.750" y="0.750" width="25.500" height="25.500" fill="#fff" stroke="#000" stroke-width="1.500"/><path d="M11.800 2.200 L14.600 2.500 Q16 8 14.800 12 Q15.500 18 16.500 24 L13 24.600 Q11.800 18 12.400 12 Q11.500 7 11.800 2.200Z" fill="#2d4060"/></svg><span class="nm">右上衣</span><svg class="tg" width="14" height="14"><circle cx="7" cy="7" r="5.500" fill="none" stroke="#d9d9d9" stroke-width="1.500"/></svg></div>
<div class="abs row" style="top:425.5px"><i class="cb" style="background:#ff9900"></i><svg class="chev" width="8" height="12"><path d="M1.200 1 L6.200 6 L1.200 11" fill="none" stroke="#ececec" stroke-width="2"/></svg><svg class="th" width="27" height="27" viewBox="0 0 27 27"><rect x="0.750" y="0.750" width="25.500" height="25.500" fill="#fff" stroke="#000" stroke-width="1.500"/><path d="M2.200 19 C5 10 14 4 24.600 4.500 Q25.600 5.500 24.800 8 L21.500 20 Q20.500 22 19 20.500 L18.500 13.500 C13 15 9 18.500 6 22 Q3 23.500 2.200 19Z" fill="#e2a5a5"/></svg><span class="nm">左手</span><svg class="tg" width="14" height="14"><circle cx="7" cy="7" r="5.500" fill="none" stroke="#d9d9d9" stroke-width="1.500"/></svg></div>
<div class="abs row" style="top:457.0px"><i class="cb" style="background:#9933ff"></i><svg class="chev" width="8" height="12"><path d="M1.200 1 L6.200 6 L1.200 11" fill="none" stroke="#ececec" stroke-width="2"/></svg><svg class="th" width="27" height="27" viewBox="0 0 27 27"><rect x="0.750" y="0.750" width="25.500" height="25.500" fill="#fff" stroke="#000" stroke-width="1.500"/><path d="M13.700 2 L18.200 2.500 L12.400 25 L9.200 24.500Z" fill="#2d4060"/></svg><span class="nm">左小臂</span><svg class="tg" width="14" height="14"><circle cx="7" cy="7" r="5.500" fill="none" stroke="#d9d9d9" stroke-width="1.500"/></svg></div>
<div class="abs row" style="top:488.5px"><i class="cb" style="background:#993300"></i><svg class="chev" width="8" height="12"><path d="M1.200 1 L6.200 6 L1.200 11" fill="none" stroke="#ececec" stroke-width="2"/></svg><svg class="th" width="27" height="27" viewBox="0 0 27 27"><rect x="0.750" y="0.750" width="25.500" height="25.500" fill="#fff" stroke="#000" stroke-width="1.500"/><path d="M12.400 4.500 Q15.500 0.500 17.600 4 L16.200 22.500 Q13.500 26.500 10 22.500 Q10.200 13 12.400 4.500Z" fill="#2d4060"/></svg><span class="nm">左大臂</span><svg class="tg" width="14" height="14"><circle cx="7" cy="7" r="5.500" fill="none" stroke="#d9d9d9" stroke-width="1.500"/></svg></div>
<div class="abs row" style="top:520.0px"><i class="cb" style="background:#cc9966"></i><svg class="chev" width="8" height="12"><path d="M1.200 1 L6.200 6 L1.200 11" fill="none" stroke="#ececec" stroke-width="2"/></svg><svg class="th" width="27" height="27" viewBox="0 0 27 27"><rect x="0.750" y="0.750" width="25.500" height="25.500" fill="#fff" stroke="#000" stroke-width="1.500"/><path d="M24.800 19 C22 10 13 4 2.400 4.500 Q1.400 5.500 2.200 8 L5.500 20 Q6.500 22 8 20.500 L8.500 13.500 C14 15 18 18.500 21 22 Q24 23.500 24.800 19Z" fill="#e2a5a5"/></svg><span class="nm">右手</span><svg class="tg" width="14" height="14"><circle cx="7" cy="7" r="5.500" fill="none" stroke="#d9d9d9" stroke-width="1.500"/></svg></div>
<div class="abs row" style="top:551.5px"><i class="cb" style="background:#009999"></i><svg class="chev" width="8" height="12"><path d="M1.200 1 L6.200 6 L1.200 11" fill="none" stroke="#ececec" stroke-width="2"/></svg><svg class="th" width="27" height="27" viewBox="0 0 27 27"><rect x="0.750" y="0.750" width="25.500" height="25.500" fill="#fff" stroke="#000" stroke-width="1.500"/><path d="M9.200 2.800 L13.700 2.200 L18.200 24.500 L16.200 25Z" fill="#2d4060"/></svg><span class="nm">右小臂</span><svg class="tg" width="14" height="14"><circle cx="7" cy="7" r="5.500" fill="none" stroke="#d9d9d9" stroke-width="1.500"/></svg></div>
<div class="abs row" style="top:583.0px"><i class="cb" style="background:#005400"></i><svg class="chev" width="8" height="12"><path d="M1.200 1 L6.200 6 L1.200 11" fill="none" stroke="#ececec" stroke-width="2"/></svg><svg class="th" width="27" height="27" viewBox="0 0 27 27"><rect x="0.750" y="0.750" width="25.500" height="25.500" fill="#fff" stroke="#000" stroke-width="1.500"/><path d="M9.300 4.500 Q12.500 0.500 15.800 4 Q17.500 13 17.500 22.500 Q14.500 26.500 11.300 22.500Z" fill="#2d4060"/></svg><span class="nm">右大臂</span><svg class="tg" width="14" height="14"><circle cx="7" cy="7" r="5.500" fill="none" stroke="#d9d9d9" stroke-width="1.500"/></svg></div>
<div class="abs row" style="top:614.5px"><i class="cb" style="background:#ff6600"></i><svg class="chev" width="8" height="12"><path d="M1.200 1 L6.200 6 L1.200 11" fill="none" stroke="#ececec" stroke-width="2"/></svg><svg class="th" width="27" height="27" viewBox="0 0 27 27"><rect x="0.750" y="0.750" width="25.500" height="25.500" fill="#fff" stroke="#000" stroke-width="1.500"/><path d="M9 2.200 H20.800 Q21.500 7.500 24.400 11.200 Q19 17 14.600 24.600 Q9.500 17.500 3.100 11.800 Q8 7.500 9 2.200Z" fill="#1b2d4f"/></svg><span class="nm">胯</span><svg class="tg" width="14" height="14"><circle cx="7" cy="7" r="5.500" fill="none" stroke="#d9d9d9" stroke-width="1.500"/></svg></div>
<div class="abs row" style="top:646.0px"><i class="cb" style="background:#000000"></i><svg class="chev" width="8" height="12"><path d="M1.200 1 L6.200 6 L1.200 11" fill="none" stroke="#ececec" stroke-width="2"/></svg><svg class="th" width="27" height="27" viewBox="0 0 27 27"><rect x="0.750" y="0.750" width="25.500" height="25.500" fill="#fff" stroke="#000" stroke-width="1.500"/><rect x="1.500" y="9" width="24" height="8.300" fill="#5c3a35"/></svg><span class="nm">腰</span><svg class="tg" width="14" height="14"><circle cx="7" cy="7" r="5.500" fill="none" stroke="#d9d9d9" stroke-width="1.500"/></svg></div>
<div class="abs row" style="top:677.5px"><i class="cb" style="background:#808080"></i><svg class="chev" width="8" height="12"><path d="M1.200 1 L6.200 6 L1.200 11" fill="none" stroke="#ececec" stroke-width="2"/></svg><svg class="th" width="27" height="27" viewBox="0 0 27 27"><rect x="0.750" y="0.750" width="25.500" height="25.500" fill="#fff" stroke="#000" stroke-width="1.500"/><path d="M4 3.500 Q13.500 0.500 23 3.500 Q22 14 21 23 Q13.500 25 7 23 Q4.500 13 4 3.500Z" fill="#fdecf0"/></svg><span class="nm">上半身</span><svg class="tg" width="14" height="14"><circle cx="7" cy="7" r="5.500" fill="none" stroke="#d9d9d9" stroke-width="1.500"/></svg></div>
<div class="abs row" style="top:709.0px"><i class="cb" style="background:#4fffff"></i><svg class="chev" width="8" height="12"><path d="M1.200 1 L6.200 6 L1.200 11" fill="none" stroke="#ececec" stroke-width="2"/></svg><svg class="th" width="27" height="27" viewBox="0 0 27 27"><rect x="0.750" y="0.750" width="25.500" height="25.500" fill="#fff" stroke="#000" stroke-width="1.500"/><path d="M6.400 2 H20.700 V21 Q20.700 25 16.700 25 H10.400 Q6.400 25 6.400 21Z" fill="#d4868a"/></svg><span class="nm">脖子</span><svg class="tg" width="14" height="14"><circle cx="7" cy="7" r="5.500" fill="none" stroke="#d9d9d9" stroke-width="1.500"/></svg></div>
<div class="abs row" style="top:740.5px"><i class="cb" style="background:#ff4fff"></i><svg class="chev" width="8" height="12"><path d="M1.200 1 L6.200 6 L1.200 11" fill="none" stroke="#ececec" stroke-width="2"/></svg><svg class="th" width="27" height="27" viewBox="0 0 27 27"><rect x="0.750" y="0.750" width="25.500" height="25.500" fill="#fff" stroke="#000" stroke-width="1.500"/><g fill="#5c3a35"><circle cx="8" cy="10" r="1.700"/><circle cx="19.5" cy="10" r="1.7"/></g><g fill="none" stroke="#5c3a35" stroke-width="1.300" stroke-linecap="round"><path d="M4 5.5 Q6 3 9 4"/><path d="M18 3.500 Q21.5 2.500 23.5 5"/><path d="M14.5 10 Q13.500 12.500 15.5 12.500 Q17 13 15.5 15.5"/><path d="M8 17.500 Q12 24 20 21.500"/></g></svg><span class="nm">五官</span><svg class="tg" width="14" height="14"><circle cx="7" cy="7" r="5.500" fill="none" stroke="#d9d9d9" stroke-width="1.500"/></svg></div>
<div class="abs row" style="top:772.0px"><i class="cb" style="background:#bababa"></i><svg class="chev" width="8" height="12"><path d="M1.200 1 L6.200 6 L1.200 11" fill="none" stroke="#ececec" stroke-width="2"/></svg><svg class="th" width="27" height="27" viewBox="0 0 27 27"><rect x="0.750" y="0.750" width="25.500" height="25.500" fill="#fff" stroke="#000" stroke-width="1.500"/><path d="M17.400 2.500 Q12 9 12 15 Q9 16 10 19 Q12.500 23 17 24.500 Q13.800 19 13.800 13 Q14 7 17.400 2.500Z" fill="#f6d5d8"/></svg><span class="nm">脸阴影</span><svg class="tg" width="14" height="14"><circle cx="7" cy="7" r="5.500" fill="none" stroke="#d9d9d9" stroke-width="1.500"/></svg></div>
<div class="abs row" style="top:803.5px"><i class="cb" style="background:#4f4fff"></i><svg class="chev" width="8" height="12"><path d="M1.200 1 L6.200 6 L1.200 11" fill="none" stroke="#ececec" stroke-width="2"/></svg><svg class="th" width="27" height="27" viewBox="0 0 27 27"><rect x="0.750" y="0.750" width="25.500" height="25.500" fill="#fff" stroke="#000" stroke-width="1.500"/><ellipse cx="15" cy="13.300" rx="8.500" ry="10.700" fill="#e2a5a5"/><circle cx="7" cy="14.500" r="2.200" fill="#e2a5a5"/></svg><span class="nm">脸</span><svg class="tg" width="14" height="14"><circle cx="7" cy="7" r="5.500" fill="none" stroke="#d9d9d9" stroke-width="1.500"/></svg></div>
<div class="abs row" style="top:835.0px"><i class="cb" style="background:#4fff4f"></i><svg class="chev" width="8" height="12"><path d="M1.200 1 L6.200 6 L1.200 11" fill="none" stroke="#ececec" stroke-width="2"/></svg><svg class="th" width="27" height="27" viewBox="0 0 27 27"><rect x="0.750" y="0.750" width="25.500" height="25.500" fill="#fff" stroke="#000" stroke-width="1.500"/><path d="M3.500 14 Q3 4.500 12 2.500 Q18 1 22 4 Q26 7.500 25.200 15.500 Q21.500 11 20 6 Q14.500 13.500 6.500 15 Q7 20 6.500 23.500 Q4 19 3.500 14Z" fill="#5c3a35"/></svg><span class="nm">头发 2</span><svg class="tg" width="14" height="14"><circle cx="7" cy="7" r="5.500" fill="none" stroke="#d9d9d9" stroke-width="1.500"/></svg></div>
<div class="abs row" style="top:866.5px"><i class="cb" style="background:#ff4f4f"></i><svg class="chev" width="8" height="12"><path d="M1.200 1 L6.200 6 L1.200 11" fill="none" stroke="#ececec" stroke-width="2"/></svg><svg class="th" width="27" height="27" viewBox="0 0 27 27"><rect x="0.750" y="0.750" width="25.500" height="25.500" fill="#fff" stroke="#000" stroke-width="1.500"/><path d="M13.500 2 Q19.500 2 20.500 9 Q24.500 15 22.500 21 Q21 25 17 24.500 H10 Q5 25 4 20 Q3 14 6.500 9 Q7.500 2 13.500 2Z" fill="#5c3a35"/></svg><span class="nm">头发 1</span><svg class="tg" width="14" height="14"><circle cx="7" cy="7" r="5.500" fill="none" stroke="#d9d9d9" stroke-width="1.500"/></svg></div>
<div class="abs row" style="top:898.0px"><i class="cb" style="background:#4f80ff"></i><svg class="chev" width="8" height="12"><path d="M1.200 1 L6.200 6 L1.200 11" fill="none" stroke="#ececec" stroke-width="2"/></svg><svg class="th" width="27" height="27" viewBox="0 0 27 27"><rect x="0.750" y="0.750" width="25.500" height="25.500" fill="#fff" stroke="#000" stroke-width="1.500"/><g><path d="M11.500 3.500 Q13 1 15 2.500 Q16 4 15 6.500 L12 7 Q11 5 11.500 3.500Z" fill="#5c3a35"/><circle cx="13.800" cy="4.500" r="1.300" fill="#e2a5a5"/><path d="M12 7 H15.500 L17 13 L15.800 13.500 L15.500 24.500 H13.800 L13.600 17 L13.300 24.500 H11.800 L11.500 13.500 L10.300 13 Z" fill="#1b2d4f"/></g></svg><span class="nm">图层 <span style="margin-left:3.500px">1</span></span><svg class="tg" width="14" height="14"><circle cx="7" cy="7" r="5.500" fill="none" stroke="#d9d9d9" stroke-width="1.500"/></svg></div>
<svg class="abs" style="left:15.3px;top:905.8px" width="18.4" height="12.9" viewBox="0 0 20 14"><path d="M0.500 7 Q10 -4.500 19.500 7 Q10 18.500 0.500 7Z" fill="#c9c9c9"/><circle cx="10" cy="7" r="4.100" fill="#535353"/><circle cx="10" cy="7" r="2.300" fill="#c9c9c9"/></svg>
<svg class="abs" style="left:343px;top:110.5px" width="10" height="10"><path d="M0.500 0 H9 V9Z" fill="#d2d2d2"/></svg>
<div class="abs" id="lfoot"><span>26 图层</span></div>
<svg class="abs" style="left:100px;top:998px" width="230" height="26" fill="none" stroke="#c8c8c8" stroke-width="1.500">
<path d="M14.500 6.500 H7.500 V22 H23 V15"/><path d="M14.500 13.500 L24.500 3.500 M17.500 3.200 H24.800 V10.500"/>
<g stroke="#6d6d6d"><circle cx="52.500" cy="10.500" r="5.800" stroke-width="1.700"/><path d="M57 15 L63.500 21.500" stroke-width="2.400"/></g>
<rect x="86" y="5.500" width="12.500" height="12.500" /><rect x="89" y="8.500" width="6.500" height="6.500" fill="#c8c8c8" stroke="none"/><path d="M93 18.500 V22.500 H102.500 V11.500 H99" stroke="#8a8a8a"/>
<path d="M122.500 4 V9.500 H129" stroke-width="1.600"/><path d="M127 6.500 L130 9.500 L127 12.500" stroke-width="1.400"/><rect x="132.500" y="8.500" width="12.500" height="12.500"/><path d="M138.800 11.500 V18 M135.500 14.800 H142"/>
<rect x="166.500" y="5" width="15" height="17"/><path d="M174 9.500 V17.500 M170 13.500 H178"/>
<g transform="translate(2,0)"><path d="M203.500 9 V21 Q203.500 22.500 205 22.500 H214 Q215.500 22.500 215.500 21 V9 M201.500 7.500 H217.500 M206.500 7 Q206.500 3.500 209.500 3.500 Q212.500 3.500 212.500 7 M207 11 V20 M209.500 11 V20 M212 11 V20" stroke-width="1.400"/></g>
</svg>
<div class="abs" style="left:0;top:1027.5px;width:362px;height:2px;background:#1f1f1f"></div>
<div class="abs" style="left:0;top:1029.5px;width:362px;height:9.5px;background:#4b4b4b"></div>
<svg class="abs" style="left:166.5px;top:1030.6px" width="32" height="7"><path d="M1.500 0v6M4.500 0v6M7.500 0v6M10.500 0v6M13.500 0v6M16.500 0v6M19.500 0v6M22.500 0v6M25.500 0v6M28.500 0v6" stroke="#363636" stroke-width="1" fill="none"/></svg>
</div>
<!--LAYERS-END-->
</body>
</html>
